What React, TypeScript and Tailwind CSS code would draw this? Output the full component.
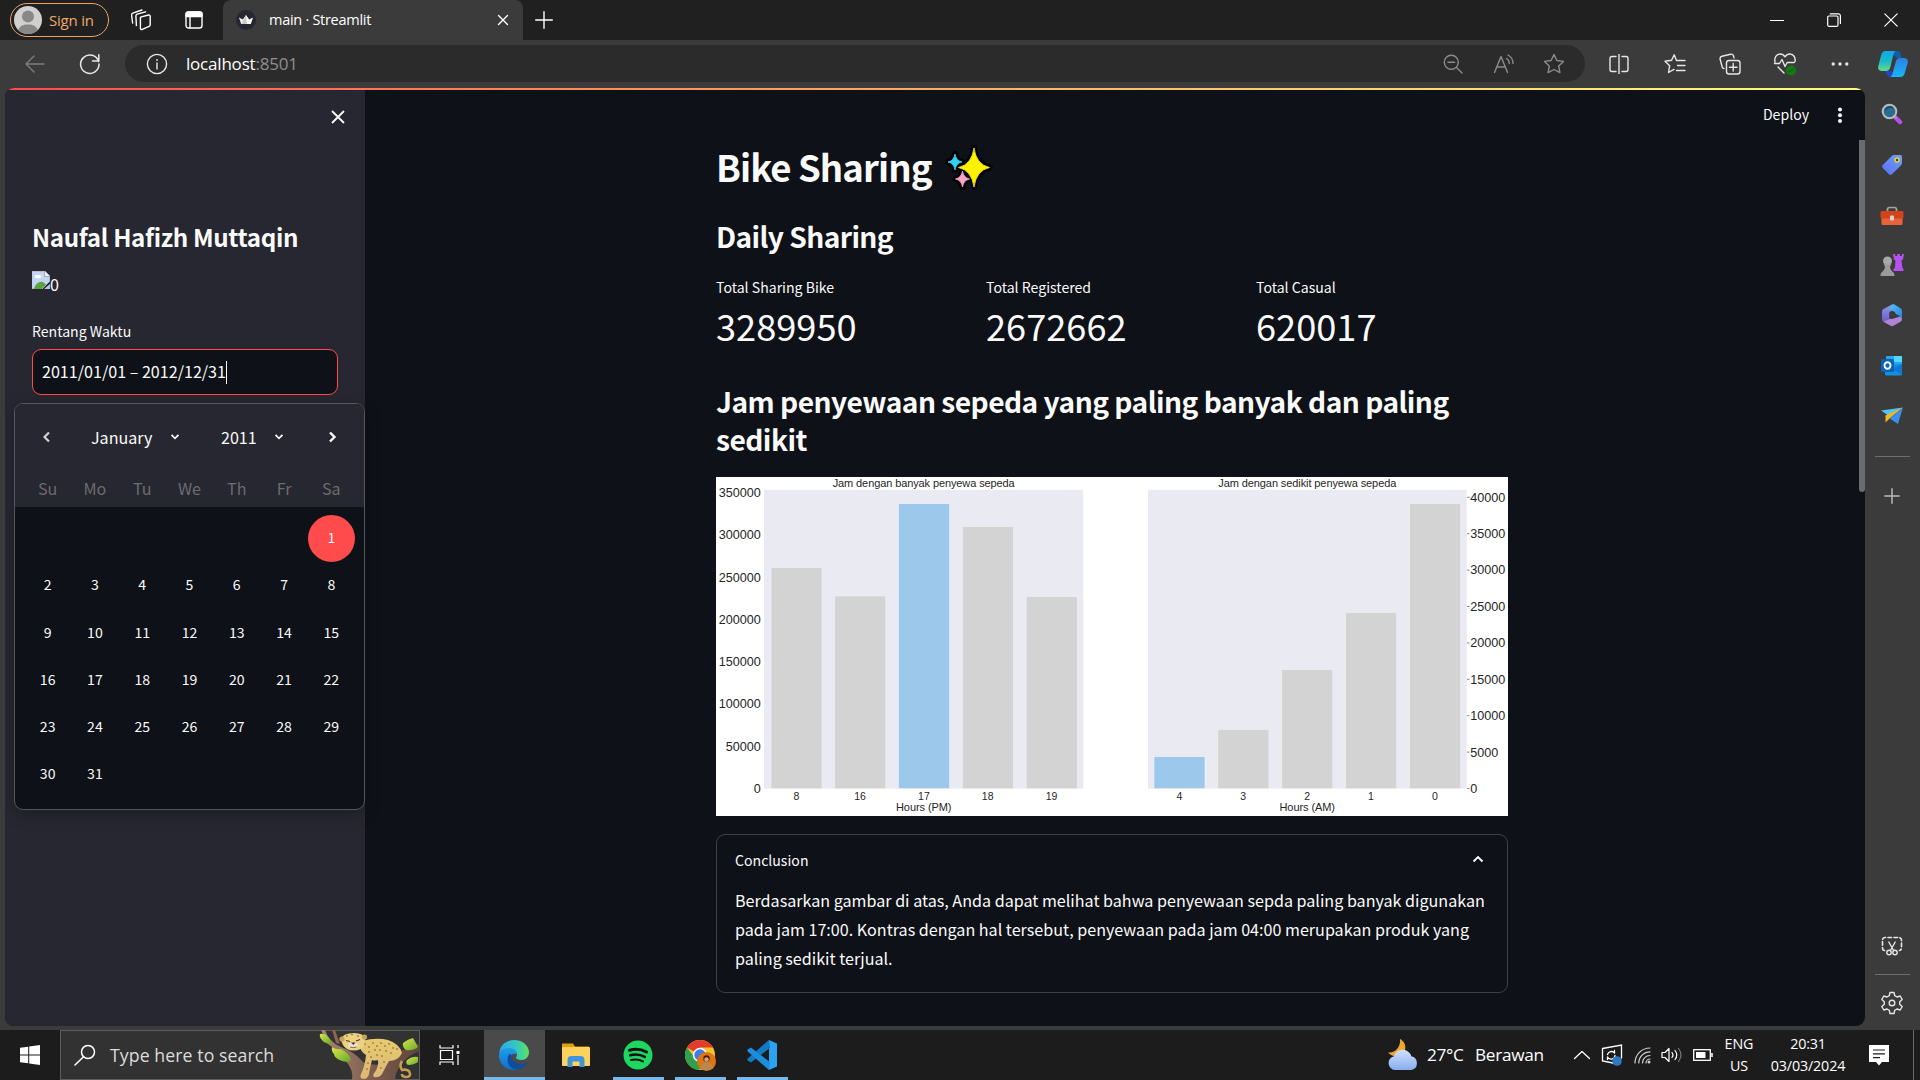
import type { ReactNode } from "react";

type Bar = { x: number; y: number; label: string; hot?: boolean };

function Svg({ w, h, vb, children, className = "" }: { w: number; h: number; vb?: string; children: ReactNode; className?: string }) {
  return (
    <svg
      width={w}
      height={h}
      viewBox={vb ?? `0 0 ${w} ${h}`}
      fill="none"
      stroke="currentColor"
      strokeWidth="1.4"
      strokeLinecap="round"
      strokeLinejoin="round"
      className={`shrink-0 ${className}`}
    >
      {children}
    </svg>
  );
}

/* ---------- Browser chrome ---------- */

function TitleBar() {
  return (
    <div className="flex h-10 items-center bg-[#202020] text-white">
      <div className="ml-[10px] flex h-[34px] w-[99px] items-center rounded-full border-[1.5px] border-[#e8a467] pl-[3px]">
        <Svg w={28} h={28}>
          <clipPath id="av"><circle cx="14" cy="14" r="14" /></clipPath>
          <g clipPath="url(#av)" stroke="none">
            <rect width="28" height="28" fill="#d2d0ce" />
            <circle cx="14" cy="10.5" r="6" fill="#8a8886" />
            <path d="M4 28c0-7 3-9.5 10-9.5S24 21 24 28z" fill="#8a8886" />
          </g>
        </Svg>
        <span className="ml-[7px] text-[15px] leading-[20px] tracking-[-0.2px] text-[#f0a86c]">Sign in</span>
      </div>
      <Svg w={22} h={22} className="ml-[21px]">
        <path d="M10.5 8.2l8-2.2c1-.2 1.7.3 1.7 1.3v8.5c0 .8-.5 1.4-1.2 1.6l-6.600 3c-1.200.4-2-.1-2-1.200V9.600c0-.8 0-1.200.1-1.400z" />
        <path d="M6.400 16.600l-.5-9.600c0-1 .4-1.500 1.200-1.800l8.500-2.400" />
        <path d="M2.600 14l-1-8c0-1 .3-1.500 1.100-1.800L12 1" />
      </Svg>
      <Svg w={18} h={18} className="ml-[33px]">
        <rect x="1" y="1" width="16" height="16" rx="2.500" />
        <path d="M1 5.500V3a2 2 0 012-2h12a2 2 0 012 2v2.500z" fill="currentColor" />
        <path d="M5 6v11" />
      </Svg>
      <div className="ml-[20px] flex h-10 w-[300px] items-center rounded-t-lg bg-[#3b3b3b] pl-[13px] pr-[14px]">
        <Svg w={20} h={20}>
          <circle cx="10" cy="10" r="10" fill="#262730" stroke="none" />
          <path d="M3 7.500l3.800 2L10 5l3.200 4.500 3.800-2-2.200 6.500H5.200z" fill="#fff" stroke="none" />
          <path d="M5.200 14L10 5l1 9z" fill="#c9c9cc" stroke="none" />
        </Svg>
        <span className="ml-[13px] grow text-[14.500px] leading-[20px] tracking-[-0.28px]">main · Streamlit</span>
        <Svg w={12} h={12}><path d="M1.500 1.500l9 9M10.500 1.500l-9 9" /></Svg>
      </div>
      <Svg w={18} h={18} className="ml-[12px]"><path d="M9 .7v16.600M.7 9h16.600" /></Svg>
      <div className="ml-auto mr-[22px] flex items-center gap-[43px]">
        <Svg w={14} h={14}><path d="M.5 7.500h13" strokeWidth="1.200" /></Svg>
        <Svg w={14} h={14}>
          <rect x=".7" y="3" width="10.300" height="10.300" rx="1.200" strokeWidth="1.200" />
          <path d="M3.200.8h8a2.200 2.200 0 012.200 2.200v7.500" strokeWidth="1.200" />
        </Svg>
        <Svg w={14} h={14}><path d="M.8.8l12.400 12.400M13.200.8L.8 13.200" strokeWidth="1.200" /></Svg>
      </div>
    </div>
  );
}

function Toolbar() {
  return (
    <div className="flex h-12 items-center bg-[#3b3b3b] pb-[1px] text-[#e8e8e8]">
      <Svg w={20} h={18} className="ml-[25px] text-[#7d7d7d]"><path d="M19 9H1M9 1L1 9l8 8" /></Svg>
      <Svg w={22} h={22} className="ml-[34px]"><path d="M19.600 8.500A9.200 9.200 0 1020 11M19.800 1.800V8h-6.300" strokeWidth="1.500" /></Svg>
      <div className="ml-[24px] flex h-[37px] w-[1460px] items-center rounded-full bg-[#2b2b2b]">
        <Svg w={22} h={22} className="ml-[21px]">
          <circle cx="11" cy="11" r="9.600" />
          <path d="M11 10v6" />
          <circle cx="11" cy="6.900" r=".9" fill="currentColor" stroke="none" />
        </Svg>
        <span className="ml-[18px] grow text-[17px] leading-[24px] tracking-[-0.200px] text-white">
          localhost<span className="text-[#8f8f8f]">:8501</span>
        </span>
        <div className="flex items-center text-[#8c8c8c]">
          <Svg w={20} h={20} className="mr-[30px]"><circle cx="8.300" cy="8.300" r="7" /><path d="M13.500 13.500l5.500 5.500M5 8.300h6.600" /></Svg>
          <Svg w={22} h={20} className="mr-[28px]">
            <path d="M1.500 18.500L8 2.500l6.500 16M4 13h8M13.500 4.500a6 6 0 012.800 5M15 1a9.500 9.500 0 015 8.500" />
          </Svg>
          <Svg w={22} h={22} className="mr-[20px]">
            <path d="M11 1.500l2.900 6 6.600.9-4.800 4.600 1.200 6.600L11 16.500l-5.900 3.100L6.300 13 1.500 8.400l6.600-.9z" />
          </Svg>
        </div>
      </div>
      <div className="flex w-[283px] items-center justify-start text-[#e6e6e6]">
        <Svg w={20} h={20} className="ml-[24px]">
          <path d="M10 0v20M7 2.500H3A2 2 0 001 4.500v11a2 2 0 002 2h4M13 2.500h4a2 2 0 012 2v11a2 2 0 01-2 2h-4" />
        </Svg>
        <Svg w={22} h={22} className="ml-[35px]">
          <path d="M12.500 7.500L10.200 1.800 7.600 7.300 1 8.200l4.700 4.500-1.200 6.800 5.500-3.100M12.500 7.500H21M13.500 12.500H21M12.500 17.500H21" />
        </Svg>
        <Svg w={22} h={22} className="ml-[33px]">
          <rect x="7.500" y="7.500" width="13.500" height="13.500" rx="2.500" />
          <path d="M14.200 10.500v7.500M10.500 14.200H18M5 15.500c-1 0-1.500-.5-1.800-1.500L1.200 6.500C.8 5 1.500 3.700 3 3.300l8.500-2.100c1.400-.3 2.500.3 3 1.600l.5 2" />
        </Svg>
        <Svg w={24} h={24} className="ml-[32px]">
          <path d="M2 10C1 5.500 3.500 2 7 2c2.200 0 3.800 1 5 2.800C13.200 3 14.800 2 17 2c3.500 0 5.700 3.500 5 7.500M1.500 11.500h5L9 7.500l3 7 2.200-4h7M5 15l6 6" />
          <circle cx="18" cy="18.500" r="5" fill="#107c10" stroke="none" />
          <path d="M15.800 18.500l1.500 1.500 2.800-3" strokeWidth="1" stroke="#3b3b3b" />
        </Svg>
        <Svg w={18} h={6} className="ml-[34px]">
          <g fill="currentColor" stroke="none"><circle cx="2.200" cy="3" r="1.700" /><circle cx="9" cy="3" r="1.700" /><circle cx="15.800" cy="3" r="1.700" /></g>
        </Svg>
      </div>
      <Svg w={30} h={28} className="ml-[10px]">
        <defs>
          <linearGradient id="cpA" x1="0" y1="0" x2="0" y2="1"><stop offset="0" stopColor="#12a7ec" /><stop offset=".5" stopColor="#1bb9c8" /><stop offset="1" stopColor="#66d98a" /></linearGradient>
          <linearGradient id="cpB" x1="0" y1="0" x2="0" y2="1"><stop offset="0" stopColor="#2f7fe4" /><stop offset="1" stopColor="#16b8f3" /></linearGradient>
        </defs>
        <g stroke="none">
          <path d="M15 1h4c2.500 0 3.500 1.500 4 4l.7 3h-5L14 4z" fill="#0d5fa8" />
          <path d="M7 21h5l4 2-2 4h-1c-3 0-4-1.500-4.600-3.500z" fill="#2244cf" />
          <path d="M7.500 1H18c-1.600.6-2.200 2-2.700 4l-3 12c-.6 2.500-2 4-4.300 4H4c-3 0-4.500-2-3.700-5L3.200 5C4 2.300 5.300 1 7.500 1z" fill="url(#cpA)" />
          <path d="M22.500 27H12c1.600-.6 2.200-2 2.700-4l3-11c.6-2.500 2-4 4.300-4h4c3 0 4.500 2 3.700 5L26.800 23c-.8 2.700-2.100 4-4.300 4z" fill="url(#cpB)" />
        </g>
      </Svg>
    </div>
  );
}

/* ---------- Streamlit sidebar with date picker ---------- */

const WEEKDAYS = ["Su", "Mo", "Tu", "We", "Th", "Fr", "Sa"];
const DAYS: (number | null)[] = [null, null, null, null, null, null, ...Array.from({ length: 31 }, (_, i) => i + 1)];

function Calendar() {
  return (
    <div className="ml-[9px] mt-[8px] h-[407px] w-[351px] overflow-hidden rounded-[9px] border border-[#55565e] bg-[#0e1117] shadow-[0_4px_16px_rgba(0,0,0,0.25)]">
      <div className="h-[103px] bg-[#262730]">
        <div className="flex h-[66px] items-center text-[16.100px] text-[#fafafa]">
          <Svg w={10} h={12} className="ml-[27px] text-[#cfcfd3]"><path d="M7 1.500L2.500 6 7 10.500" strokeWidth="2.200" strokeLinecap="butt" strokeLinejoin="miter" /></Svg>
          <span className="ml-[39px] w-[70px] pb-[1px] leading-[24px]">January</span>
          <Svg w={10} h={8} className="ml-[9px]"><path d="M1.500 1.800L5 5.300l3.500-3.500" strokeWidth="1.700" strokeLinecap="butt" strokeLinejoin="miter" /></Svg>
          <span className="ml-[41px] w-[40px] pb-[1px] leading-[24px]">2011</span>
          <Svg w={10} h={8} className="ml-[13px]"><path d="M1.500 1.800L5 5.300l3.500-3.500" strokeWidth="1.700" strokeLinecap="butt" strokeLinejoin="miter" /></Svg>
          <Svg w={10} h={12} className="ml-[43px]"><path d="M3 1.500L7.500 6 3 10.500" strokeWidth="2.400" strokeLinecap="butt" strokeLinejoin="miter" /></Svg>
        </div>
        <div className="grid grid-cols-7 px-[9px] pt-[4px] text-center text-[16.100px] leading-[28px] text-[#6c6c6c]">
          {WEEKDAYS.map((d) => <span key={d}>{d}</span>)}
        </div>
      </div>
      <div className="grid grid-cols-7 px-[9px] pt-[8px] text-center text-[14.100px] text-[#fafafa]">
        {DAYS.map((d, i) => (
          <span key={i} className={`flex h-[47.250px] items-center justify-center pb-[2px] ${d === 1 ? "rounded-full bg-[#ff4b4b]" : ""}`}>{d}</span>
        ))}
      </div>
    </div>
  );
}

function Sidebar() {
  return (
    <div className="flex w-[360px] shrink-0 flex-col bg-[#262730] text-[#fafafa]">
      <div className="flex h-[54px] items-center justify-end pr-[20px]">
        <Svg w={14} h={14}><path d="M1 1l12 12M13 1L1 13" strokeWidth="1.800" strokeLinecap="butt" /></Svg>
      </div>
      <h2 className="ml-[27px] mt-[77px] text-[24.200px] font-bold leading-[32px] tracking-[-0.360px]">Naufal Hafizh Muttaqin</h2>
      <div className="ml-[27px] mt-[16px] flex h-[26px] items-start">
        <Svg w={18} h={18} className="mt-[2px]">
          <g stroke="none">
            <path d="M0 0h13l5 5v5L10 18H0z" fill="#c3d6f7" />
            <path d="M0 0h13l5 5v5L10 18H0z" stroke="#a9a9a9" strokeWidth="1" />
            <path d="M12.500 0v5.500H18z" fill="#f4f4f4" stroke="#9a9a9a" strokeWidth=".8" />
            <ellipse cx="6" cy="5.500" rx="3.500" ry="1.800" fill="#fff" />
            <path d="M2 18c1-5 5-8 9-7l3 2.500L9.500 18z" fill="#58a63a" />
            <path d="M18 13v5h-6z" fill="#b8c6dc" />
          </g>
        </Svg>
        <span className="text-[16.100px] leading-[31px]">0</span>
      </div>
      <div className="ml-[27px] mt-[24px] text-[14.100px] leading-[24px]">Rentang Waktu</div>
      <div className="ml-[27px] mt-[6px] flex h-[46px] w-[306px] items-center rounded-[9px] border border-[#ff4b4b] bg-[#0e1117] pl-[9px] text-[16.100px]">
        <span className="pb-[2px]">2011/01/01 – 2012/12/31</span>
        <span className="h-[23px] w-px bg-white" />
      </div>
      <Calendar />
    </div>
  );
}

/* ---------- Charts ---------- */

const PM: Bar[] = [
  { x: 55, y: 90.700, label: "8" },
  { x: 118.800, y: 119, label: "16" },
  { x: 182.600, y: 26.700, label: "17", hot: true },
  { x: 246.400, y: 49.700, label: "18" },
  { x: 310.200, y: 119.700, label: "19" },
];
const AM: Bar[] = [
  { x: 438, y: 279.700, label: "4", hot: true },
  { x: 501.900, y: 252.400, label: "3" },
  { x: 565.800, y: 192.700, label: "2" },
  { x: 629.700, y: 135.700, label: "1" },
  { x: 693.600, y: 26.700, label: "0" },
];

function Bars({ data }: { data: Bar[] }) {
  return (
    <>
      {data.map((b) => (
        <g key={b.label}>
          <rect x={b.x} y={b.y} width="51" height={311.600 - b.y} fill={b.hot ? "#9cc8eb" : "#d3d3d3"} stroke="#f0f0f4" strokeWidth=".6" />
          <text x={b.x + 25.300} y="323" fontSize="10.500" textAnchor="middle">{b.label}</text>
        </g>
      ))}
    </>
  );
}

function Charts() {
  return (
    <svg width="792" height="339" viewBox="0 0 792 339" className="mt-[19px] bg-white" fill="#262626" fontFamily="'Liberation Sans', Arial, sans-serif">
      <rect x="48" y="12.800" width="319.300" height="298.800" fill="#eaeaf2" />
      <rect x="432" y="12.800" width="318.700" height="298.800" fill="#eaeaf2" />
      <Bars data={PM} />
      <Bars data={AM} />
      {[0, 1, 2, 3, 4, 5, 6, 7].map((i) => (
        <text key={i} x="44.700" y={316 - i * 42.270} fontSize="12.600" textAnchor="end">{i * 50000}</text>
      ))}
      {[0, 1, 2, 3, 4, 5, 6, 7, 8].map((i) => (
        <g key={i}>
          <path d={`M751 ${311.500 - i * 36.400}h2.500`} stroke="#555" strokeWidth=".7" />
          <text x="754.300" y={316 - i * 36.430} fontSize="12.600">{i * 5000}</text>
        </g>
      ))}
      <text x="116.700" y="10.300" fontSize="11" textLength="182">Jam dengan banyak penyewa sepeda</text>
      <text x="502.300" y="10.300" fontSize="11" textLength="178">Jam dengan sedikit penyewa sepeda</text>
      <text x="180" y="334.300" fontSize="11" textLength="55.500">Hours (PM)</text>
      <text x="563.500" y="334.300" fontSize="11" textLength="55.500">Hours (AM)</text>
    </svg>
  );
}

/* ---------- Main column ---------- */

function Sparkles() {
  const star = (cx: number, cy: number, rx: number, ry: number) =>
    `M${cx} ${cy - ry}Q${cx + rx * 0.15} ${cy - ry * 0.15} ${cx + rx} ${cy}Q${cx + rx * 0.15} ${cy + ry * 0.15} ${cx} ${cy + ry}Q${cx - rx * 0.15} ${cy + ry * 0.15} ${cx - rx} ${cy}Q${cx - rx * 0.15} ${cy - ry * 0.15} ${cx} ${cy - ry}z`;
  const shapes = [
    { d: star(28, 21.500, 15.500, 19.500), c: "#fff100" },
    { d: star(9, 16, 7, 8), c: "#31d2f7" },
    { d: star(16.500, 33, 7, 8), c: "#f9a3cb" },
  ];
  return (
    <svg width="46" height="44" viewBox="0 0 46 44" className="ml-[14px] mt-[2px] overflow-visible">
      {shapes.map((s) => <path key={`${s.c}-edge`} d={s.d} fill="#000" stroke="#000" strokeWidth="6" strokeLinejoin="round" />)}
      {shapes.map((s) => <path key={s.c} d={s.d} fill={s.c} stroke={s.c} strokeWidth=".8" />)}
    </svg>
  );
}

function Metric({ label, value }: { label: string; value: string }) {
  return (
    <div className="w-[270px] shrink-0">
      <div className="text-[14.100px] leading-[24px]">{label}</div>
      <div className="text-[36.200px] leading-[52px]">{value}</div>
    </div>
  );
}

function Main() {
  return (
    <div className="flex w-[1494px] shrink-0 flex-col text-[#fafafa]">
      <div className="flex h-[50px] items-center justify-end pr-[15px]">
        <span className="mr-[27px] pb-[2px] text-[14.100px] leading-[24px]">Deploy</span>
        <Svg w={8} h={16}><g fill="currentColor" stroke="none"><circle cx="4" cy="2.500" r="2" /><circle cx="4" cy="8.200" r="2" /><circle cx="4" cy="14" r="2" /></g></Svg>
      </div>
      <div className="ml-[351px] flex w-[792px] flex-col">
        <h1 className="flex h-[48px] items-center pt-[5px] text-[36.600px] font-bold leading-[48px] tracking-[-0.940px]">
          Bike Sharing
          <Sparkles />
        </h1>
        <h2 className="mt-[31px] text-[28.200px] font-bold leading-[34px] tracking-[-0.600px]">Daily Sharing</h2>
        <div className="mt-[22px] flex">
          <Metric label="Total Sharing Bike" value="3289950" />
          <Metric label="Total Registered" value="2672662" />
          <Metric label="Total Casual" value="620017" />
        </div>
        <h2 className="mt-[31px] text-[28.200px] font-bold leading-[38px] tracking-[-0.540px]">
          Jam penyewaan sepeda yang paling banyak dan paling<br />sedikit
        </h2>
        <Charts />
        <div className="mt-[18px] h-[159px] rounded-[9px] border border-[#3d4045] pl-[18px] pr-[16px]">
          <div className="mt-[13px] flex items-center justify-between pr-[7px] text-[14.100px] leading-[24px]">
            Conclusion
            <Svg w={12} h={10} className="-mt-[2px]"><path d="M1.500 7.500L6 3l4.500 4.500" strokeWidth="1.900" strokeLinecap="butt" strokeLinejoin="miter" /></Svg>
          </div>
          <p className="mt-[14px] whitespace-nowrap text-[16.120px] leading-[29px]">
            Berdasarkan gambar di atas, Anda dapat melihat bahwa penyewaan sepda paling banyak digunakan<br />
            pada jam 17:00. Kontras dengan hal tersebut, penyewaan pada jam 04:00 merupakan produk yang<br />
            paling sedikit terjual.
          </p>
        </div>
      </div>
    </div>
  );
}

/* ---------- Edge side rail ---------- */

function Rail() {
  return (
    <div className="flex w-[55px] flex-col items-center bg-[#3b3b3b] pr-[1px] pt-[15px]">
      <Svg w={22} h={22}>
        <path d="M14 14l5 5" stroke="#c04af5" strokeWidth="4.500" />
        <path d="M12 12l3 3" stroke="#999" strokeWidth="2" />
        <circle cx="8.500" cy="8.500" r="6.800" fill="#2a6c92" stroke="#b9bcbe" strokeWidth="2" />
        <path d="M4.500 7a5 5 0 017-2.500" stroke="#174a68" strokeWidth="1.500" />
      </Svg>
      <Svg w={22} h={22} className="mt-[29px]">
        <defs><linearGradient id="tag" x1="1" y1="0" x2="0" y2="1"><stop stopColor="#6fa2ff" /><stop offset="1" stopColor="#5b6cf5" /></linearGradient></defs>
        <path d="M13 1h6.500A1.500 1.500 0 0121 2.500V9a3 3 0 01-1 2.200L11 20.300a2.200 2.200 0 01-3 0L1.700 14a2.200 2.200 0 010-3L10.800 2A3 3 0 0113 1z" fill="url(#tag)" stroke="none" />
        <circle cx="16" cy="6" r="2" fill="#3b3b80" stroke="#f2d21b" strokeWidth="1.500" />
      </Svg>
      <Svg w={24} h={22} className="mt-[29px]">
        <path d="M7.500 6V4.500a2 2 0 012-2h5a2 2 0 012 2V6" stroke="#a5a5a5" strokeWidth="1.700" />
        <rect x="1.500" y="11" width="21" height="9" rx="1.500" fill="#e8633a" stroke="none" />
        <rect x=".5" y="6" width="23" height="7.500" rx="1.500" fill="#d24319" stroke="none" />
        <rect x="10" y="10.500" width="4" height="5" rx="1" fill="#d4d4d4" stroke="none" />
      </Svg>
      <Svg w={24} h={24} className="mt-[26px]">
        <g stroke="none">
          <path d="M13 1h2.200v2h2V1h2.600v2h2V1H24l-1 5.500-1.500 1 .8 7 1.200 1.500v2H13.500v-2l1.500-1.500.5-7-1.500-1z" fill="#b653f0" />
          <circle cx="7.500" cy="8" r="4.500" fill="#a8a8a8" />
          <path d="M3.500 11.500h8l-1.500 2c.2 3 1.500 4 3.500 6 .8.800 1 2 1 3.500H.5c0-1.500.2-2.700 1-3.500 2-2 3.300-3 3.500-6z" fill="#9b9b9b" />
        </g>
      </Svg>
      <Svg w={22} h={24} className="mt-[26px]">
        <defs>
          <linearGradient id="mA" x1="0" y1="0" x2="0" y2="1"><stop stopColor="#8e9bee" /><stop offset="1" stopColor="#6a58c4" /></linearGradient>
          <linearGradient id="mB" x1="0" y1="0" x2="1" y2="1"><stop stopColor="#4bc5f5" /><stop offset="1" stopColor="#2f7ce0" /></linearGradient>
        </defs>
        <g stroke="none">
          <path d="M11 1.500L2.500 6A3 3 0 001 8.700v7.500a3 3 0 001.500 2.600l1 .6 5-3.400V9.500L14 4z" fill="url(#mA)" />
          <path d="M2.500 18.800l7 3.900a3 3 0 003 0l7-4a3 3 0 001.500-2.500V13l-8.500 2.500-4 .500z" fill="#b083d6" />
          <path d="M11 1.500c.8-.4 1.700-.4 2.500 0l6 3.700A3 3 0 0121 8v8c-1-2.500-3-3-4-4l-3-1.500V9l-5-2z" fill="url(#mB)" />
          <path d="M8.500 9.500l2.500-1.500 3.500 2v3.500L11 16l-2.500-1.500z" fill="#3b3b3b" />
        </g>
      </Svg>
      <Svg w={22} h={22} className="mt-[28px]">
        <g stroke="none">
          <rect x="5" y="1" width="16" height="12" rx="1" fill="#28a8ea" />
          <rect x="13" y="1" width="8" height="6" fill="#50d9ff" />
          <path d="M4 10l17-1v10a1.500 1.500 0 01-1.500 1.500H5.500A1.500 1.500 0 014 19z" fill="#1490df" />
          <path d="M21 9v11L11 14z" fill="#0f78d4" />
          <rect x="0" y="4" width="13" height="13" rx="1.300" fill="#0a62b8" />
        </g>
        <ellipse cx="6.500" cy="10.500" rx="3" ry="3.300" stroke="#fff" strokeWidth="1.900" />
      </Svg>
      <Svg w={22} h={20} className="mt-[29px]">
        <g stroke="none">
          <path d="M0 4.500L22 1.500 8 10z" fill="#53c3f3" />
          <path d="M22 1.500L4.500 9.500v7L9 12z" fill="#f5b71a" />
          <path d="M22 1.500L8.500 12.500 17 18z" fill="#3a8fe8" />
        </g>
      </Svg>
      <div className="mt-[30px] h-px w-[35px] bg-[#6e6e6e]" />
      <Svg w={16} h={16} className="mt-[31px] text-[#bdbdbd]"><path d="M8 .8v14.400M.8 8h14.400" /></Svg>
      <Svg w={22} h={20} className="mt-[432px] text-[#e6e6e6]">
        <path d="M3.500 14.500A2.500 2.500 0 011.500 12V4A2.500 2.500 0 014 1.500h14A2.500 2.500 0 0120.500 4v8a2.500 2.500 0 01-2 2.500" strokeDasharray="3.600 2.400" strokeWidth="1.600" />
        <path d="M7.800 6l4.800 8.500M14.200 6l-4.800 8.500" />
        <circle cx="8" cy="16.500" r="2.200" /><circle cx="14" cy="16.500" r="2.200" />
      </Svg>
      <div className="mt-[18px] h-px w-[35px] bg-[#6e6e6e]" />
      <Svg w={22} h={24} className="mt-[16px] text-[#e6e6e6]">
        <path d="M9 1.500h4l.7 3.200 2.300 1.300 3.200-1 2 3.500-2.500 2.200v2.600l2.500 2.200-2 3.500-3.200-1-2.300 1.300-.7 3.200H9l-.7-3.200L6 18l-3.200 1-2-3.500 2.500-2.200v-2.600L.8 8.500l2-3.500L6 6l2.300-1.300z" />
        <circle cx="11" cy="12" r="2.800" />
      </Svg>
    </div>
  );
}

/* ---------- Windows taskbar ---------- */

const SPOTS = [
  [46, 14], [50, 17], [54, 13], [58, 16], [62, 13], [66, 16], [70, 14], [74, 18], [78, 19], [56, 20], [61, 20], [67, 21],
  [50, 22], [72, 23], [52, 27], [49, 33], [63, 26], [65, 32], [58, 25], [28, 6], [33, 4.500], [39, 6], [62, 38], [48, 39],
];

function Leopard() {
  return (
    <svg width="101" height="50" viewBox="0 0 101 50" className="-mr-px ml-auto shrink-0">
      <defs>
        <linearGradient id="bark" x1="0" y1="0" x2="1" y2="0"><stop stopColor="#a98670" /><stop offset=".55" stopColor="#7a5b4c" /><stop offset="1" stopColor="#5d453b" /></linearGradient>
        <linearGradient id="fur" x1="0" y1="0" x2="0" y2="1"><stop stopColor="#e6cb70" /><stop offset="1" stopColor="#dcb878" /></linearGradient>
        <linearGradient id="leaf" x1="0" y1="0" x2="1" y2="1"><stop stopColor="#d9e84a" /><stop offset="1" stopColor="#69a82a" /></linearGradient>
      </defs>
      <path d="M2 0h4q4 12 16 17 14 5 22 15 8 4 20 2 8-11 20-14 10-2 17-7v8q-14 5-20 15-5 8-5 14H33q2-10-7-20Q18 20 9 14z" fill="url(#bark)" />
      <path d="M13 0h3l5 14-4-1z" fill="#8a6755" />
      <path d="M83 31q-3 5 0 9 4-1 7 1 3 6-3 6-4 0-4-3" fill="none" stroke="#c79b50" strokeWidth="2.600" />
      <path d="M43 11q14-4 26-1 12 4 14 13-4 8-13 8-4 7-7 13-3 4-8 3-2-2 1-5 4-6 3-12-4 1-6 0-2 7-3 14-1 5-6 5-4-1-2-5 4-8 5-19-6-4-6-9z" fill="url(#fur)" />
      <path d="M22 9q2-6 13-6 10 0 11 6 1 7-4 10-8 3-14 0-5-3-6-10z" fill="#ead184" />
      <circle cx="23" cy="9" r="2.600" fill="#caa35a" /><circle cx="45.500" cy="7" r="2.600" fill="#caa35a" />
      <path d="M27 10.500l4 1M37 11l4-1.500" stroke="#5a3b28" strokeWidth="1.200" />
      <ellipse cx="34" cy="15.500" rx="5" ry="3.200" fill="#f0e2c4" />
      <path d="M32 12.500h4.500l-2.200 2.500z" fill="#4a2c25" />
      <path d="M31 17q3.200 1.500 6.500 0" fill="none" stroke="#4a2c25" strokeWidth=".7" />
      <g fill="#9a6c31">
        {SPOTS.map(([x, y]) => <ellipse key={`${x}-${y}`} cx={x} cy={y} rx="1.100" ry=".8" />)}
      </g>
      <path d="M1 4q5-1 9 4 3 4 1 6Q5 13 3 10 0 7 1 4z" fill="url(#leaf)" />
      <path d="M13 17q4 3 9 2 8 4 10 11-3 3-9 1-8-3-8-7-3-3-2-7z" fill="url(#leaf)" />
      <path d="M84 13q5-4 10-5 3 5 5 9-5 4-12 3-4-3-3-7z" fill="url(#leaf)" />
      <path d="M88 30q5-4 11-3v5q-4 3-10 3-3-2-1-5z" fill="url(#leaf)" />
    </svg>
  );
}

function AppButton({ children, running, active }: { children: ReactNode; running?: boolean; active?: boolean }) {
  return (
    <div className={`flex h-[50px] w-[61px] flex-col items-center ${active ? "bg-[#4a4a4a]" : ""}`}>
      <div className="flex h-[47px] items-center pr-[1px] pt-[3px]">{children}</div>
      {active && <div className="h-[3px] w-[61px] bg-[#76b9ed]" />}
      {running && !active && <div className="h-[3px] w-[51px] bg-[#76b9ed]" />}
    </div>
  );
}

function Taskbar() {
  return (
    <div className="flex h-[50px] items-center bg-[#1c1c1c] text-white">
      <Svg w={20} h={20} className="ml-[20px]">
        <path d="M0 2.800l8.200-1.100v7.800H0zM9.200 1.500L20 0v9.500H9.200zM0 10.500h8.200v7.800L0 17.200zM9.200 10.500H20V20L9.200 18.500z" fill="#fff" stroke="none" />
      </Svg>
      <div className="ml-[20px] flex h-[50px] w-[360px] items-center border border-[#5c5c5c] bg-[#323232]">
        <Svg w={22} h={22} className="ml-[13px]"><circle cx="14" cy="8" r="6.500" strokeWidth="1.500" /><path d="M9.500 12.700L1 21" strokeWidth="1.500" /></Svg>
        <span className="ml-[14px] whitespace-nowrap text-[17.700px] leading-[24px] tracking-[0.080px] text-[#dcdcdc]">Type here to search</span>
        <Leopard />
      </div>
      <Svg w={22} h={20} className="ml-[19px]">
        <path d="M1 0v3h13V0M1 20v-3h13v3M1.500 5.500h12v9h-12zM19 0v3M19 10v10" strokeLinecap="butt" strokeLinejoin="miter" strokeWidth="1.200" />
        <rect x="17.500" y="6" width="3" height="3" fill="#fff" stroke="none" />
      </Svg>
      <div className="ml-[23px] flex gap-px">
        <AppButton active>
          <Svg w={30} h={30}>
            <defs>
              <linearGradient id="eA" x1="0" y1="0" x2="1" y2="0"><stop stopColor="#2aa8ea" /><stop offset=".6" stopColor="#35c9bd" /><stop offset="1" stopColor="#63e25a" /></linearGradient>
              <linearGradient id="eB" x1="0" y1="0" x2="0" y2="1"><stop stopColor="#1f9de6" /><stop offset="1" stopColor="#0b6fd0" /></linearGradient>
            </defs>
            <g stroke="none">
              <path d="M.2 13C1 5 7.500 0 15 0c9 0 15 6 15 12.500 0 4.500-3.500 7.500-7.500 7.500-3.500 0-5.500-1.200-5.500-2.300 0-.8 1-1.200 1-3.200C18 11 14.500 9 10.500 9 5.500 9 2 11 .2 13z" fill="url(#eA)" />
              <path d="M.2 13C2 9.500 6 8 10 8c4.500 0 8 2.500 8 6.500-2-2-8.500-.5-8.500 6 0 5 4 9 9.500 9-1.200.4-2.500.5-4 .5C6.500 30 0 23.500 0 15.500z" fill="url(#eB)" />
              <path d="M11.500 13.500c-2 1-3 3.500-3 6.500 0 5 4 9.500 9.500 9.500 4 0 8-2.500 10-6 .3-.7-.2-1-.8-.7-6 3-15 .5-15.700-9.300z" fill="#114c9c" />
            </g>
          </Svg>
        </AppButton>
        <AppButton>
          <Svg w={30} h={26}>
            <g stroke="none">
              <path d="M1 1.500h11l2 3h14v3H1z" fill="#e69f0c" />
              <rect x="1" y="5" width="28" height="19" rx="1" fill="#ffd35b" />
              <path d="M6.500 25v-7a4 4 0 014-4h9a4 4 0 014 4v7h-5v-5.500h-7V25z" fill="#3f94dc" />
            </g>
          </Svg>
        </AppButton>
        <AppButton running>
          <Svg w={30} h={30}>
            <circle cx="15" cy="15" r="14.500" fill="#1ed760" stroke="none" />
            <path d="M6.500 10.300c6-1.700 12-1 17 1.700" stroke="#111" strokeWidth="3" />
            <path d="M7.300 15.300c5-1.400 10.200-.8 14.500 1.600" stroke="#111" strokeWidth="2.500" />
            <path d="M8 20c4.300-1.100 8.500-.6 12 1.400" stroke="#111" strokeWidth="2" />
          </Svg>
        </AppButton>
        <AppButton running>
          <Svg w={32} h={32}>
            <g stroke="none">
              <circle cx="16" cy="16" r="15" fill="#f7c52b" />
              <path d="M16 16L3 8.500A15 15 0 0129 8.500H16z" fill="#e33b2e" />
              <path d="M3 8.500A15 15 0 0015 31l6-11-10-1z" fill="#2da14c" />
              <circle cx="16" cy="16" r="7.200" fill="#fff" /><circle cx="16" cy="16" r="5.700" fill="#3b7ded" />
              <circle cx="22.500" cy="22.500" r="9.500" fill="#e07312" />
              <circle cx="22.500" cy="19.500" r="3.200" fill="#3d2215" /><circle cx="22.500" cy="20.500" r="2.200" fill="#d8a47a" />
              <path d="M16.500 29c0-4 2.500-5.500 6-5.500s6 1.500 6 5.500q-6 4.500-12 0z" fill="#b58a4c" />
            </g>
          </Svg>
        </AppButton>
        <AppButton running>
          <Svg w={30} h={30}>
            <g stroke="none">
              <path d="M22 0l8 3.500v23L22 30z" fill="#2ba3f0" />
              <path d="M22 0l1 8L4 22.500 1 20.800q-1.500-1 0-2.500z" fill="#1279c4" />
              <path d="M22 30l1-8L4 7.500 1 9.200q-1.500 1 0 2.500z" fill="#1b8fdd" />
            </g>
          </Svg>
        </AppButton>
      </div>
      <div className="ml-auto flex items-center">
        <Svg w={32} h={32}>
          <defs><linearGradient id="cl" x1="0" y1="0" x2="0" y2="1"><stop stopColor="#cfe0fb" /><stop offset="1" stopColor="#88aef0" /></linearGradient></defs>
          <g stroke="none">
            <path d="M13 0c5 2.500 6.500 8 4.500 12.500-2.500 6-11 7-16.500 1C8 14.500 14 8 13 0z" fill="#f0a52c" />
            <path d="M8 31a7 7 0 01-1-13.800A9 9 0 0123 14.500c1 .9 1.200 2 1.200 2.800A7 7 0 0124.500 31z" fill="url(#cl)" />
          </g>
        </Svg>
        <span className="ml-[8px] w-[48px] text-[17.200px] leading-[24px] tracking-[-0.300px]">27°C</span>
        <span className="w-[98px] text-[17.200px] leading-[24px] tracking-[-0.300px]">Berawan</span>
        <Svg w={18} h={10}><path d="M1.500 8.500L9 1.500l7.500 7" strokeWidth="1.300" /></Svg>
        <Svg w={22} h={22} className="ml-[10px]">
          <path d="M1.500 4.500L20.500 1v13M12 19l-10.500-2V4.500" strokeWidth="1.300" strokeLinejoin="miter" />
          <path d="M6.500 10.500a4 4 0 017-1.500V6.500M14 11.500a4 4 0 01-7.500 1.500v2.500" strokeWidth="1.300" />
          <circle cx="16" cy="17" r="4.800" fill="#2f78c4" stroke="none" />
        </Svg>
        <Svg w={17} h={18} className="ml-[11px] text-[#cfcfcf]">
          <path d="M1 17A15 15 0 0116 2M4.800 17A11.200 11.200 0 0116 5.800M8.500 17A7.500 7.500 0 0116 9.500" strokeWidth="1.200" />
          <path d="M12 17a4 4 0 014-4" strokeWidth="1.200" /><circle cx="15" cy="16" r="1.500" fill="currentColor" stroke="none" />
        </Svg>
        <Svg w={22} h={18} className="ml-[10px]">
          <path d="M1 6.500h3l4-4v13l-4-4H1z" strokeWidth="1.200" /><path d="M11 6.500q2 2.500 0 5M14 4.500q3.500 4.500 0 9" strokeWidth="1.200" />
          <path d="M17.500 2.500q5 6.500 0 13" stroke="#777" strokeWidth="1.200" />
        </Svg>
        <Svg w={20} h={12} className="ml-[10px]">
          <rect x=".7" y=".7" width="16.600" height="10.600" strokeWidth="1.300" strokeLinejoin="miter" /><rect x="3" y="3" width="9.500" height="6" fill="#fff" stroke="none" />
          <path d="M19 4v4" strokeWidth="1.500" strokeLinecap="butt" />
        </Svg>
        <div className="ml-[7px] flex w-[38px] flex-col items-center text-[14.300px] leading-[22.500px] tracking-[-0.100px]"><span>ENG</span><span>US</span></div>
        <div className="ml-[6px] flex w-[88px] flex-col items-center text-[14.300px] leading-[22.500px] tracking-[-0.150px]"><span>20:31</span><span>03/03/2024</span></div>
        <Svg w={20} h={22} className="ml-[17px]">
          <path d="M0 1h20v17h-7l-3 3.500L7 18H0z" fill="#fff" stroke="none" />
          <path d="M4 6h12M4 9.800h12M4 13.600h7" stroke="#1c1c1c" strokeWidth="1.200" strokeLinecap="butt" />
        </Svg>
        <div className="ml-[24px] mr-[6px] h-[50px] w-px bg-[#6a6a6a]" />
      </div>
    </div>
  );
}

export default function App() {
  return (
    <div className="h-[1080px] w-[1920px] overflow-hidden bg-[#3b3b3b] font-['Open_Sans','Noto_Sans',sans-serif]">
      <TitleBar />
      <Toolbar />
      <div className="flex h-[942px]">
        <div className="ml-[5px] flex h-[938px] w-[1860px] shrink-0 flex-col overflow-hidden rounded-[9px] bg-[#0e1117] font-['Noto_Sans_CJK_SC','Noto_Sans',sans-serif]">
          <div className="h-[2px] shrink-0 bg-linear-to-r from-[#ff4b4b] to-[#fffd80]" />
          <div className="flex grow">
            <Sidebar />
            <Main />
            <div className="mt-[50px] h-[352px] w-[6px] rounded-b-full bg-[#6b6c70]" />
          </div>
        </div>
        <Rail />
      </div>
      <Taskbar />
    </div>
  );
}
